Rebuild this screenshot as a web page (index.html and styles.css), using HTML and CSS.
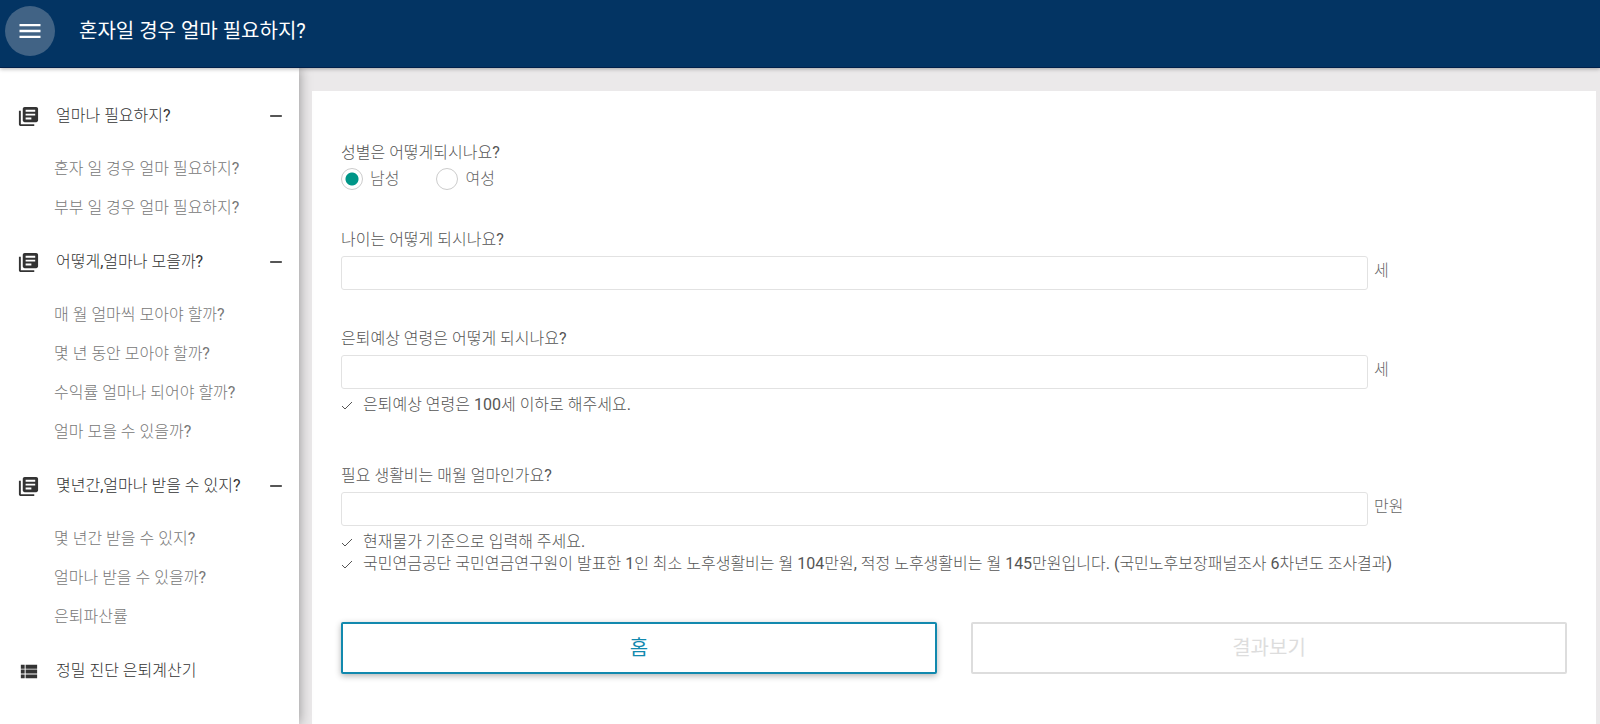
FILE: index.html
```html
<!DOCTYPE html>
<html lang="ko">
<head>
  <meta charset="UTF-8">
  <meta name="viewport" content="width=device-width, initial-scale=1.0">
  <title>혼자일 경우 얼마 필요하지?</title>
  <link rel="stylesheet" href="styles.css">
</head>
<body>
  <!-- shared icons -->
  <svg class="sprite" aria-hidden="true">
    <symbol id="icon-books" viewBox="0 0 24 24"><path d="M4 6H2v14c0 1.100.9 2 2 2h14v-2H4V6zm16-4H8c-1.100 0-2 .9-2 2v12c0 1.100.9 2 2 2h12c1.100 0 2-.9 2-2V4c0-1.100-.9-2-2-2zm-1 9H9V9h10v2zm-4 4H9v-2h6v2zm4-8H9V5h10v2z"/></symbol>
    <symbol id="icon-list" viewBox="0 0 24 24"><path d="M4 14h4v-4H4v4zm0 5h4v-4H4v4zM4 9h4V5H4v4zm5 5h12v-4H9v4zm0 5h12v-4H9v4zM9 5v4h12V5H9z"/></symbol>
    <symbol id="icon-minus" viewBox="0 0 24 24"><path d="M19 13H5v-2h14v2z"/></symbol>
    <symbol id="icon-check" viewBox="0 0 12 12"><path d="M1 7l3 3 7-7" fill="none" stroke="currentColor"/></symbol>
  </svg>

  <header class="topbar">
    <button type="button" class="menu-btn" aria-label="메뉴">
      <svg viewBox="0 0 24 24"><path d="M3 18h18v-2H3v2zm0-5h18v-2H3v2zm0-7v2h18V6H3z"/></svg>
    </button>
    <h1>혼자일 경우 얼마 필요하지?</h1>
  </header>

  <div class="layout">
    <nav class="sidebar">
      <button type="button" class="nav-head">
        <svg class="nav-icon"><use href="#icon-books"/></svg>
        <span>얼마나 필요하지?</span>
        <svg class="nav-toggle"><use href="#icon-minus"/></svg>
      </button>
      <ul class="nav-sub">
        <li><a href="#">혼자 일 경우 얼마 필요하지?</a></li>
        <li><a href="#">부부 일 경우 얼마 필요하지?</a></li>
      </ul>

      <button type="button" class="nav-head">
        <svg class="nav-icon"><use href="#icon-books"/></svg>
        <span>어떻게,얼마나 모을까?</span>
        <svg class="nav-toggle"><use href="#icon-minus"/></svg>
      </button>
      <ul class="nav-sub">
        <li><a href="#">매 월 얼마씩 모아야 할까?</a></li>
        <li><a href="#">몇 년 동안 모아야 할까?</a></li>
        <li><a href="#">수익률 얼마나 되어야 할까?</a></li>
        <li><a href="#">얼마 모을 수 있을까?</a></li>
      </ul>

      <button type="button" class="nav-head">
        <svg class="nav-icon"><use href="#icon-books"/></svg>
        <span>몇년간,얼마나 받을 수 있지?</span>
        <svg class="nav-toggle"><use href="#icon-minus"/></svg>
      </button>
      <ul class="nav-sub">
        <li><a href="#">몇 년간 받을 수 있지?</a></li>
        <li><a href="#">얼마나 받을 수 있을까?</a></li>
        <li><a href="#">은퇴파산률</a></li>
      </ul>

      <a href="#" class="nav-head">
        <svg class="nav-icon"><use href="#icon-list"/></svg>
        <span>정밀 진단 은퇴계산기</span>
      </a>
    </nav>

    <main class="content">
      <form class="card">
        <fieldset class="field">
          <legend>성별은 어떻게되시나요?</legend>
          <div class="radios">
            <label><input type="radio" name="gender" value="m" checked>남성</label>
            <label><input type="radio" name="gender" value="f">여성</label>
          </div>
        </fieldset>

        <div class="field">
          <label for="age">나이는 어떻게 되시나요?</label>
          <div class="input-row">
            <input type="text" id="age">
            <span>세</span>
          </div>
        </div>

        <div class="field">
          <label for="retireAge">은퇴예상 연령은 어떻게 되시나요?</label>
          <div class="input-row">
            <input type="text" id="retireAge">
            <span>세</span>
          </div>
          <ul class="hints">
            <li><svg><use href="#icon-check"/></svg>은퇴예상 연령은 100세 이하로 해주세요.</li>
          </ul>
        </div>

        <div class="field">
          <label for="livingCost">필요 생활비는 매월 얼마인가요?</label>
          <div class="input-row">
            <input type="text" id="livingCost">
            <span>만원</span>
          </div>
          <ul class="hints">
            <li><svg><use href="#icon-check"/></svg>현재물가 기준으로 입력해 주세요.</li>
            <li><svg><use href="#icon-check"/></svg>국민연금공단 국민연금연구원이 발표한 1인 최소 노후생활비는 월 104만원, 적정 노후생활비는 월 145만원입니다. (국민노후보장패널조사 6차년도 조사결과)</li>
          </ul>
        </div>

        <div class="actions">
          <button type="button" class="btn">홈</button>
          <button type="submit" class="btn" disabled>결과보기</button>
        </div>
      </form>
    </main>
  </div>
</body>
</html>
```

FILE: styles.css
```css
* {
  box-sizing: border-box;
}
body {
  display: flex;
  flex-direction: column;
  min-height: 100vh;
  margin: 0;
  font-family: Roboto, "Noto Sans CJK KR Light", "Noto Sans CJK KR", sans-serif;
  font-size: 16px;
  line-height: 24px;
  color: #555;
  background-color: #ebe9ea;
}
button, input {
  font: inherit;
}
button {
  cursor: pointer;
}
ul {
  list-style: none;
  margin: 0;
  padding: 0;
}
svg {
  flex: none;
  fill: currentColor;
}
.sprite {
  display: none;
}

/* top bar */
.topbar {
  position: relative;
  z-index: 2;
  display: flex;
  align-items: center;
  gap: 24px;
  height: 68px;
  padding: 0 5px 6px;
  color: #fff;
  background-color: #033463;
  border-bottom: 1px solid #02204a;
  box-shadow: 0 1px 4px rgba(0, 0, 0, 0.3);
}
.menu-btn {
  display: flex;
  align-items: center;
  justify-content: center;
  width: 50px;
  height: 50px;
  padding: 0;
  color: #fff;
  background-color: #416385;
  border: none;
  border-radius: 50%;
}
.menu-btn svg {
  width: 28px;
  height: 28px;
}
.topbar h1 {
  margin: 0;
  font-family: Roboto, "Noto Sans CJK KR", sans-serif;
  font-size: 20px;
  font-weight: 400;
}

.layout {
  display: flex;
  flex: 1;
}

/* sidebar */
.sidebar {
  position: relative;
  z-index: 1;
  flex: none;
  width: 299px;
  padding-top: 24px;
  background-color: #fff;
  box-shadow: 0 0 12px rgba(0, 0, 0, 0.4);
}
.nav-head {
  display: flex;
  align-items: center;
  width: 100%;
  height: 48px;
  padding: 0 13px 0 17px;
  color: #333;
  text-align: left;
  text-decoration: none;
  background: none;
  border: none;
}
.nav-icon {
  width: 23px;
  height: 23px;
  margin-right: 16px;
}
.nav-toggle {
  width: 20px;
  height: 20px;
  margin-left: auto;
}
.nav-sub {
  padding: 9px 0 11px 54px;
}
.nav-sub a {
  display: block;
  line-height: 39px;
  color: #777;
  text-decoration: none;
}

/* form */
.content {
  display: flex;
  flex: 1;
  padding: 23px 4px 0 13px;
}
.card {
  display: flex;
  flex: 1;
  flex-direction: column;
  gap: 36px;
  padding: 49px 29px;
  background-color: #fff;
}
.field {
  margin: 0;
  padding: 0;
  border: none;
}
.field > label, .field legend {
  display: block;
  padding: 0;
  line-height: 26px;
}
.radios {
  display: flex;
  gap: 37px;
  padding-top: 1px;
}
.radios label {
  display: flex;
  align-items: center;
  gap: 7px;
  color: #666;
}
.radios input {
  width: 22px;
  height: 22px;
  margin: 0;
  appearance: none;
  background-color: #fff;
  border: 1px solid #ccc;
  border-radius: 50%;
}
.radios input:checked {
  background-image: radial-gradient(circle, #009688 6px, transparent 7px);
}
.input-row {
  display: grid;
  grid-template-columns: 1fr 193px;
  gap: 6px;
  margin-top: 3px;
}
.input-row input {
  width: 100%;
  height: 34px;
  padding: 4px 8px;
  background-color: #fff;
  border: 1px solid #e2e2e2;
  border-radius: 3px;
}
.input-row span {
  line-height: 30px;
  color: #666;
}
.hints {
  padding: 5px 0 11px;
  line-height: 22px;
}
.hints li {
  display: flex;
  align-items: center;
}
.hints svg {
  width: 12px;
  height: 12px;
  margin-right: 10px;
}

/* buttons */
.actions {
  display: grid;
  grid-template-columns: 1fr 1fr;
  gap: 34px;
}
.btn {
  height: 52px;
  font-family: Roboto, "Noto Sans CJK KR", sans-serif;
  font-size: 20px;
  color: #1289ae;
  background-color: #fff;
  border: 2px solid #1289ae;
  border-radius: 2px;
  box-shadow: 0 2px 6px rgba(0, 0, 0, 0.3);
}
.btn:disabled {
  color: #ddd;
  border-color: #ddd;
  box-shadow: none;
  cursor: default;
}
```
